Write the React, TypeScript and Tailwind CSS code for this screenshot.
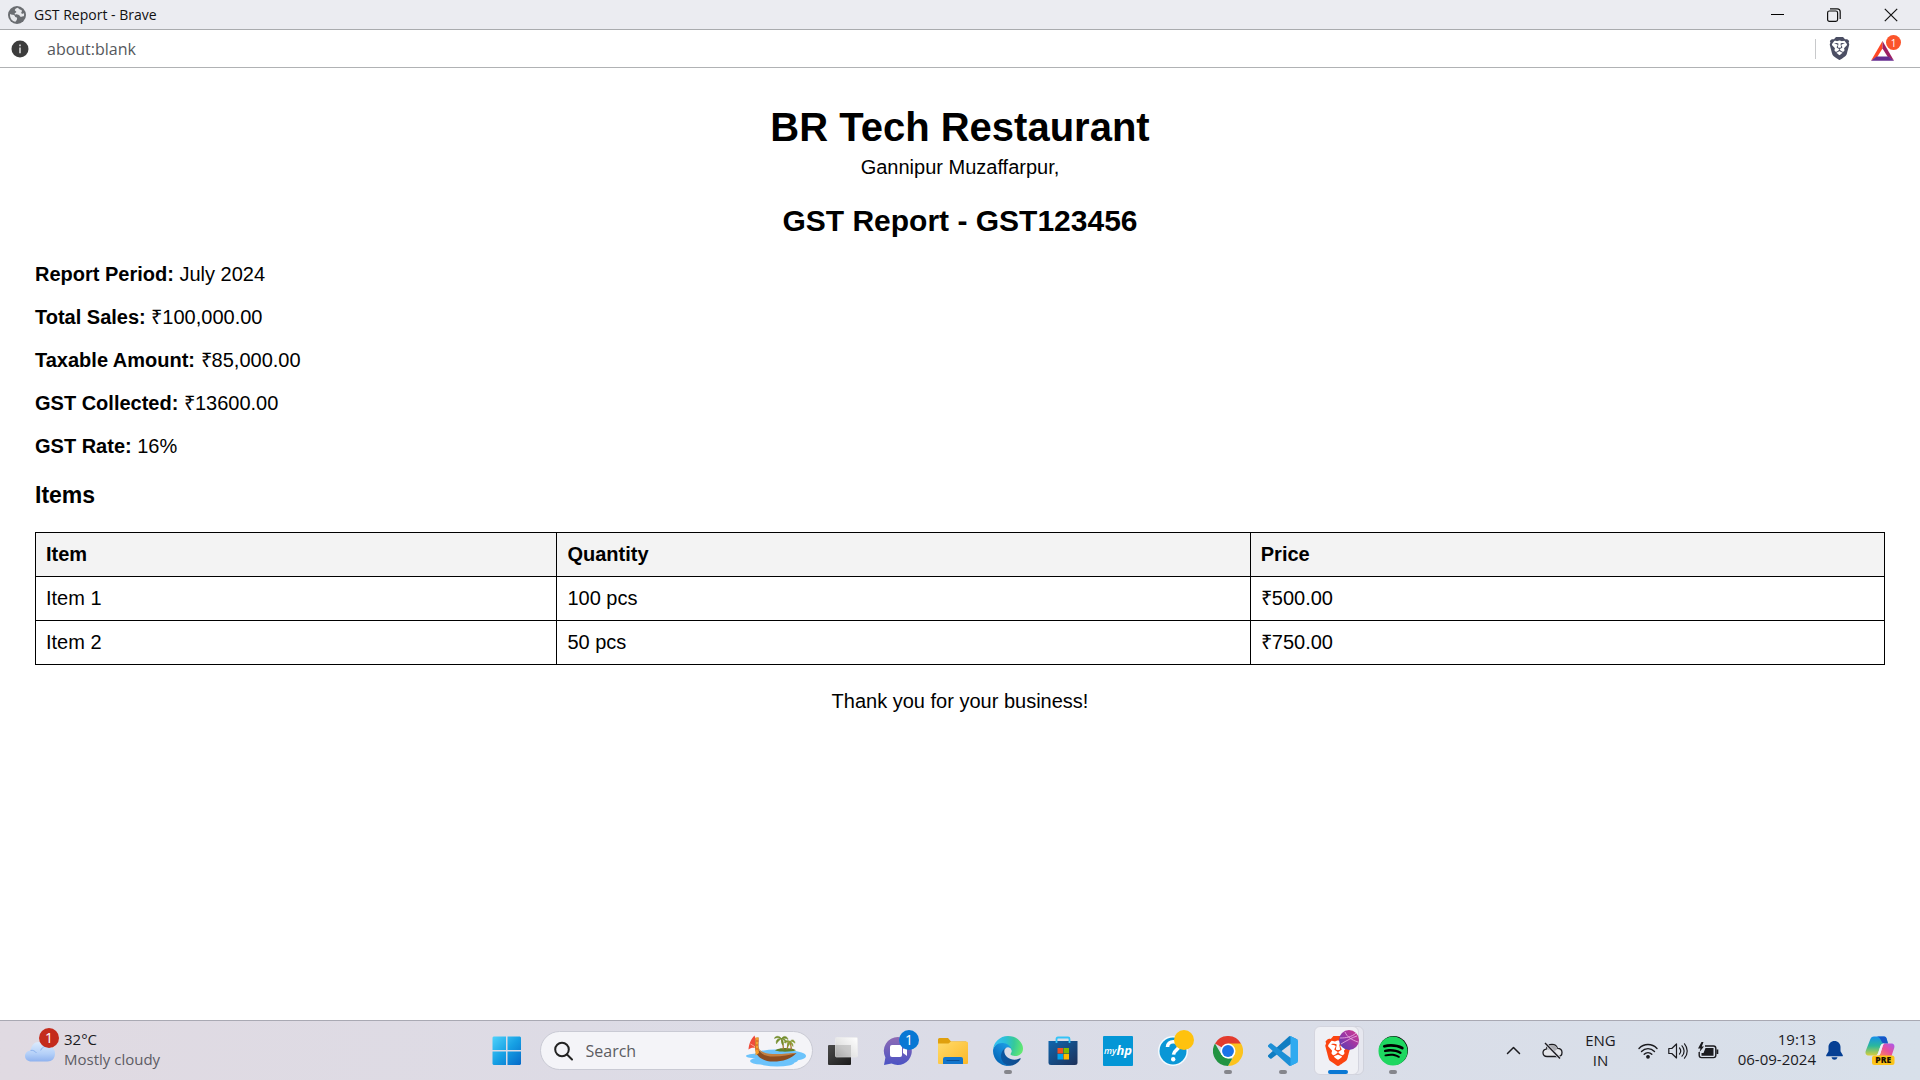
import React from "react";
import { SiBrave } from "react-icons/si";
import { FaSpotify } from "react-icons/fa";

const details = [
  { label: "Report Period:", value: "July 2024" },
  { label: "Total Sales:", value: "₹100,000.00" },
  { label: "Taxable Amount:", value: "₹85,000.00" },
  { label: "GST Collected:", value: "₹13600.00" },
  { label: "GST Rate:", value: "16%" },
];

const items = [
  { name: "Item 1", quantity: "100 pcs", price: "₹500.00" },
  { name: "Item 2", quantity: "50 pcs", price: "₹750.00" },
];

function GlobeIcon() {
  return (
    <svg width="18" height="18" viewBox="0 0 18 18" aria-hidden="true">
      <circle cx="9" cy="9" r="9" fill="#6a6d71" />
      <path d="M2 8c1.500.8 3 .6 4.200 1.200 1 .6.6 1.800 1.800 2.100 1.300.3 1.300 1.200.9 2.300-.3.900-.9 1.500-1.500 2.200C4.300 15.300 1.700 12.500 2 8z" fill="#e6e7ea" />
      <path d="M9.500 1.700c-1.600.6-2.600 1.300-2.700 2.400-.1 1 1.500.9 1.500 1.800 0 1-1.700.6-1.700 1.800 0 1.300 2.900.5 4.300 1.200 1.200.6 1 1.900 2.300 1.900 1.100 0 1.600-.7 2.700-.5.3-1.200.3-2.300 0-3.400-.9 1-2.100 1.200-2.600.4-.5-1 .9-1.500.6-2.600-.3-1.200-2-1-2.700-1.700-.4-.4-.7-.9-1.700-1.300z" fill="#e6e7ea" />
    </svg>
  );
}

function TitleBar() {
  return (
    <header className="flex h-[30px] items-center border-b border-[#a9abae] bg-[#ebecf1] pl-2">
      <GlobeIcon />
      <span className="ml-2 font-['Open_Sans',sans-serif] text-[14px] leading-5 text-[#111]">GST Report - Brave</span>
      <div className="ml-auto flex h-full">
        <button aria-label="Minimize" className="flex w-[56px] items-center justify-center">
          <svg width="14" height="14" viewBox="0 0 14 14"><path d="M0 6.500h13" stroke="#000" /></svg>
        </button>
        <button aria-label="Restore" className="flex w-[56px] items-center justify-center">
          <svg width="14" height="14" viewBox="0 0 14 14" fill="none" stroke="#111" strokeWidth="1.200">
            <rect x=".6" y="3" width="10" height="10.300" rx="1.800" />
            <path d="M3 .8h7.200c1.800 0 3 1.200 3 3V11" />
          </svg>
        </button>
        <button aria-label="Close" className="flex w-[58px] items-center justify-center">
          <svg width="14" height="14" viewBox="0 0 14 14"><path d="M.8.8l12.400 12.400M13.200.8L.8 13.200" stroke="#111" strokeWidth="1.200" /></svg>
        </button>
      </div>
    </header>
  );
}

function AddressBar() {
  return (
    <div className="flex h-[38px] items-center border-b border-[#b0b2b4] bg-white pl-[11px] pr-[19px]">
      <button aria-label="View site information">
        <svg className="block" width="18" height="18" viewBox="0 0 18 18">
          <circle cx="9" cy="9" r="8.500" fill="#3c3c3c" />
          <path d="M8.200 4.600h1.600v1.600H8.200zM8.200 7.600h1.600v5.600H8.200z" fill="#d8d8d8" />
        </svg>
      </button>
      <input
        aria-label="Address"
        readOnly
        value="about:blank"
        className="ml-[18px] min-w-0 flex-1 bg-transparent font-['Open_Sans',sans-serif] text-[16px] leading-6 text-[#55585c] outline-none"
      />
      <span className="mr-3 h-5 w-px bg-[#c8c9cb]" />
      <button aria-label="Brave Shields" className="mr-5">
        <SiBrave className="block size-[23px] text-[#4b4e63]" />
      </button>
      <button aria-label="Brave Rewards, 1 notification" className="relative pt-[5px] pr-[7px]">
        <svg className="block" width="23" height="20" viewBox="0 0 23 20">
          <path d="M11.500 0v7.500L6.500 15.500 0 19.700z" fill="#ff4724" />
          <path d="M11.500 0L23 19.700l-6.500-4.200-5-8z" fill="#9e1f63" />
          <path d="M0 19.700l5.500-4.200h12l5.500 4.200z" fill="#662d91" />
        </svg>
        <span className="absolute -top-px right-0 flex size-[15px] items-center justify-center rounded-full bg-[#fb542b] font-['Open_Sans',sans-serif] text-[10px] leading-none text-white">1</span>
      </button>
    </div>
  );
}

function Report() {
  return (
    <main className="flex-1 bg-white px-[35px] pt-9 font-['Liberation_Sans',Arial,sans-serif] text-[20px] leading-[23px] text-black">
      <div className="text-center">
        <h1 className="text-[40px] leading-[46px] font-bold">BR Tech Restaurant</h1>
        <p className="mt-[6px]">Gannipur Muzaffarpur,</p>
        <h2 className="mt-[25px] text-[30px] leading-[34px] font-bold">GST Report - GST123456</h2>
      </div>
      <div className="mt-[25px] flex flex-col gap-5">
        {details.map((d) => (
          <p key={d.label}>
            <strong className="font-bold">{d.label}</strong> {d.value}
          </p>
        ))}
      </div>
      <h3 className="mt-6 text-[23px] leading-[27px] font-bold">Items</h3>
      <table className="mt-[23px] w-full table-fixed border-collapse text-left">
        <colgroup>
          <col className="w-[28.2%]" />
          <col className="w-[37.5%]" />
          <col className="w-[34.3%]" />
        </colgroup>
        <thead className="bg-[#f3f3f3]">
          <tr>
            {["Item", "Quantity", "Price"].map((h) => (
              <th key={h} scope="col" className="border border-black px-[10px] py-[10px] font-bold">{h}</th>
            ))}
          </tr>
        </thead>
        <tbody>
          {items.map((i) => (
            <tr key={i.name}>
              <td className="border border-black px-[10px] py-[10px]">{i.name}</td>
              <td className="border border-black px-[10px] py-[10px]">{i.quantity}</td>
              <td className="border border-black px-[10px] py-[10px]">{i.price}</td>
            </tr>
          ))}
        </tbody>
      </table>
      <p className="mt-[25px] text-center">Thank you for your business!</p>
    </main>
  );
}

function CloudIcon() {
  return (
    <svg width="30" height="22" viewBox="0 0 30 22" aria-hidden="true">
      <defs>
        <linearGradient id="cloud" x1="0" y1="0" x2="0" y2="1">
          <stop offset="0" stopColor="#dcebfd" />
          <stop offset=".6" stopColor="#b4d0f8" />
          <stop offset="1" stopColor="#8fb2ef" />
        </linearGradient>
      </defs>
      <circle cx="24" cy="4" r="5" fill="#f4791f" />
      <path d="M6.500 21.500C2.500 21.500 0 19 0 16c0-3.200 2.500-5.300 5.500-5.600C6.300 5.500 9.500 2 13.500 2c3 0 5.500 1.600 6.800 4.300C26 4.500 30 8.500 30 13.500c0 5-3 8-7.500 8z" fill="url(#cloud)" />
      <path d="M5.500 10.400c2.500-.4 4.500.6 6 2.600M20.300 6.300c-2.300.6-3.800 2-4.600 4.200" fill="none" stroke="#7fa8ea" strokeWidth=".8" />
    </svg>
  );
}

function BoatIcon() {
  return (
    <svg width="62" height="32" viewBox="0 0 62 32" aria-hidden="true">
      <g fill="#6cc3fb">
        <ellipse cx="31" cy="19" rx="22" ry="4.500" />
        <ellipse cx="45" cy="21" rx="15" ry="5" />
        <ellipse cx="13" cy="21" rx="13" ry="2.500" />
        <ellipse cx="15" cy="26" rx="11" ry="3.500" />
        <ellipse cx="31" cy="28" rx="17" ry="3.500" />
        <ellipse cx="40" cy="25" rx="12" ry="4" />
      </g>
      <path d="M29 15.500c3-3 16-3.500 21-.3-5 1.800-15 2-21 .3z" fill="#617f25" />
      <path d="M37 14.500c1-3 0-6-1.500-10M45 14.500c1-3-1-5-1-8M41 14.500c.500-3 1.500-5 1-8" fill="none" stroke="#a87938" strokeWidth="1.300" />
      <path d="M35.500 3.800C33 0 29 1 28.500 3.500 31 2 33 3 35.500 3.800c-4-.8-6 1.500-5 5 1.500-2.500 3-4 5-5 0 2-.5 5 1.500 6.500.8-2 .3-5-1.500-6.500 2 .6 3.500 2 4.300 4.500 1-3-1-5-4.300-4.500C38 3 40 3 42 4.500 41.500 1 37 0 35.500 3.800z" fill="#708b28" stroke="#708b28" strokeWidth=".5" />
      <path d="M44 6.500c-2-2-5-1-6 1 2-.5 4-.5 6-1-2 .8-3 3-2.500 5.500C43 10.500 44 9 44 6.500c1 1.500 1.500 3.500 3 5 .5-2.500-1-4-3-5 2-.2 4 .4 5 1.800C49 5 46 3.500 44 6.500z" fill="#85992d" stroke="#85992d" strokeWidth=".5" />
      <path d="M8.500.5C4 5 3 10 2.500 14.500c2-1.500 4-2 6-1.500C10 9 10 4 8.500.5z" fill="#ef4a39" />
      <path d="M4.500 9l5 3" stroke="#ffa18b" />
      <path d="M9.500 3l3-.5v9c0 6 4 8.500 13 8.500 10 0 16-.8 25-2-5 6-14 8.500-23 8.500C15 26.500 9 20 9 12z" fill="#8d4d20" />
      <path d="M12.500 12c1 7 7 9.500 15 9.500 9 0 16-1.500 23-3.500-7-.2-14 1.500-24 1-8-.3-13-2.500-14-7z" fill="#c28143" />
      <path d="M9.500 2.500h3l-.500 8 1 7.500-3.500 2.500z" fill="#f7a02b" />
      <path d="M10 6h2.500M10 10h2M10 14h2" stroke="#d94f29" />
    </svg>
  );
}

function StartIcon() {
  return (
    <svg width="30" height="30" viewBox="0 0 30 30">
      <defs>
        <linearGradient id="win" x1="0" y1="0" x2="1" y2="1">
          <stop offset="0" stopColor="#4fd2fb" />
          <stop offset=".5" stopColor="#16a0e4" />
          <stop offset="1" stopColor="#0669c8" />
        </linearGradient>
      </defs>
      <path d="M1.500.5H14V14H.5V1.500zM15.500.5H28l1 1V14H15.500zM.5 15.500H14V29H1.500l-1-1zM15.500 15.500H29V28l-1 1H15.500z" fill="url(#win)" />
    </svg>
  );
}

function TaskViewIcon() {
  return (
    <svg width="30" height="30" viewBox="0 0 30 30">
      <defs>
        <linearGradient id="tvb" x1="0" y1="0" x2="1" y2="1"><stop offset="0" stopColor="#4a4a4a" /><stop offset="1" stopColor="#1b1b1b" /></linearGradient>
        <linearGradient id="tvf" x1="0" y1="1" x2="1" y2="0"><stop offset="0" stopColor="#b5b5b5" /><stop offset=".4" stopColor="#e4e4e4" /><stop offset="1" stopColor="#fff" /></linearGradient>
      </defs>
      <rect x="0" y="9" width="23" height="20" rx="1" fill="url(#tvb)" />
      <rect x="7.500" y="1.500" width="22" height="19.500" rx="1" fill="url(#tvf)" stroke="#ececec" strokeWidth=".6" />
      <path d="M8 9h15v12H8z" fill="#999" opacity=".4" />
    </svg>
  );
}

function ChatIcon() {
  return (
    <svg width="30" height="30" viewBox="0 0 30 30">
      <defs><linearGradient id="chat" x1="0" y1="0" x2="0" y2="1"><stop offset="0" stopColor="#8f6bb4" /><stop offset="1" stopColor="#4b53c4" /></linearGradient></defs>
      <path d="M15 1a14 14 0 1 1-6.500 26.500L1 29l1.400-7.500A14 14 0 0 1 15 1z" fill="url(#chat)" />
      <rect x="7" y="9" width="12" height="12" rx="2" fill="#fff" />
      <path d="M20 13l4-3v10l-4-3z" fill="#fff" />
    </svg>
  );
}

function FolderIcon() {
  return (
    <svg width="30" height="30" viewBox="0 0 30 30">
      <defs><linearGradient id="fold" x1="0" y1="0" x2="1" y2="1"><stop offset="0" stopColor="#ffdb6b" /><stop offset="1" stopColor="#fcb827" /></linearGradient></defs>
      <path d="M0 3.500Q0 2 1.500 2H10l3 3.500h15V10H0z" fill="#e0a00d" />
      <path d="M0 7.500h10.500l2.500-2h15.500Q30 5.500 30 7v20q0 1-1 1H1q-1 0-1-1z" fill="url(#fold)" />
      <path d="M5 28v-5q0-2 2-2h16q2 0 2 2v5z" fill="#1275cc" />
      <path d="M9 24.500h12" stroke="#084f96" strokeWidth="1.200" strokeLinecap="round" />
    </svg>
  );
}

function EdgeIcon() {
  return (
    <svg width="30" height="30" viewBox="4.600 5 256 256">
      <defs>
        <linearGradient id="e1" x1="63" y1="178" x2="241" y2="178" gradientUnits="userSpaceOnUse"><stop offset="0" stopColor="#0c59a4" /><stop offset="1" stopColor="#114a8b" /></linearGradient>
        <linearGradient id="e2" x1="157" y1="100" x2="46" y2="221" gradientUnits="userSpaceOnUse"><stop offset="0" stopColor="#1b9de2" /><stop offset=".5" stopColor="#1383d3" /><stop offset="1" stopColor="#0669b9" /></linearGradient>
        <radialGradient id="e3" cx="30" cy="55" r="240" gradientUnits="userSpaceOnUse"><stop offset="0" stopColor="#35c1f1" /><stop offset=".35" stopColor="#2bbfd8" /><stop offset=".65" stopColor="#36c99a" /><stop offset="1" stopColor="#66eb6e" /></radialGradient>
      </defs>
      <path fill="url(#e1)" d="M235.680 195.460a93.730 93.730 0 0 1-10.540 4.710 101.870 101.870 0 0 1-35.900 6.460c-47.320 0-88.540-32.550-88.540-74.320A31.480 31.480 0 0 1 117.130 105c-42.800 1.800-53.800 46.400-53.800 72.530 0 73.880 68.090 81.370 82.760 81.370 7.910 0 19.840-2.300 27-4.560l1.310-.44a128.340 128.340 0 0 0 66.600-52.800 4 4 0 0 0-5.320-5.640z" />
      <path fill="url(#e2)" d="M110.340 246.340A79.200 79.200 0 0 1 87.600 225a80.720 80.720 0 0 1 29.530-120c3.120-1.470 8.450-4.050 15.540-4a32.350 32.350 0 0 1 25.690 13 31.880 31.880 0 0 1 6.360 18.660c0-.21 24.460-79.600-80-79.600-43.900 0-80 41.660-80 78.210a130.150 130.150 0 0 0 12.110 56 128 128 0 0 0 156.380 67.110 75.550 75.550 0 0 1-62.780-8z" />
      <path fill="url(#e3)" d="M156.940 153.780c-.81 1.050-3.300 2.500-3.300 5.660 0 2.610 1.700 5.120 4.720 7.230 14.380 10 41.490 8.680 41.560 8.680a59.560 59.560 0 0 0 30.270-8.350 61.380 61.380 0 0 0 30.430-52.880c.26-22.410-8-37.310-11.340-43.910C228.090 28.760 182.350 5 132.610 5a128 128 0 0 0-128 126.200c.48-36.540 36.800-66.050 80-66.050 3.500 0 23.460.34 42 10.070 16.340 8.580 24.900 18.940 30.850 29.210 6.180 10.670 7.280 24.150 7.280 29.520s-2.740 13.330-7.800 19.830z" />
    </svg>
  );
}

function StoreIcon() {
  return (
    <svg width="30" height="30" viewBox="0 0 30 30">
      <defs><linearGradient id="store" x1="0" y1="0" x2="1" y2="1"><stop offset="0" stopColor="#0f66ae" /><stop offset="1" stopColor="#1d3059" /></linearGradient></defs>
      <path d="M.5 5h29v21.500q0 2.500-2.500 2.500H3q-2.500 0-2.500-2.500z" fill="url(#store)" />
      <path d="M8.500 7V3q0-1.500 1.500-1.500h10q1.500 0 1.500 1.500v4" fill="none" stroke="#34c3f7" strokeWidth="1.800" />
      <path d="M9.500 12H15v5.500H9.500z" fill="#f25022" /><path d="M15.500 12H21v5.500h-5.500z" fill="#7fba00" />
      <path d="M9.500 18H15v5.500H9.500z" fill="#00a4ef" /><path d="M15.500 18H21v5.500h-5.500z" fill="#ffb900" />
    </svg>
  );
}

function MyHpIcon() {
  return (
    <span className="flex size-[30px] items-center justify-center rounded-[1px] bg-[#0396d6] font-['Open_Sans',sans-serif] leading-none text-white italic">
      <span className="text-[9px] font-semibold">my</span>
      <span className="text-[13px] font-bold">hp</span>
    </span>
  );
}

function HelpIcon() {
  return (
    <svg width="30" height="30" viewBox="0 0 30 30">
      <circle cx="15" cy="15" r="15" fill="#f4fbff" />
      <circle cx="15" cy="15" r="13.500" fill="#0a97d6" />
      <path d="M9.500 11c0-3.500 2.600-5.300 5.700-5.300s5.500 1.800 5.500 4.700c0 3.800-4.900 3.800-5.200 8.200" fill="none" stroke="#fff" strokeWidth="3.600" />
      <circle cx="15.200" cy="23.300" r="2.200" fill="#fff" />
    </svg>
  );
}

function ChromeIcon() {
  return (
    <svg width="30" height="30" viewBox="0 0 48 48">
      <path d="M24 24L3.200 12A24 24 0 0 1 44.800 12z" fill="#e33b2e" />
      <path d="M24 12h20.800A24 24 0 0 1 24 48l10.400-18z" fill="#fcc31e" />
      <path d="M3.200 12l10.400 18L24 36h6.900L24 48A24 24 0 0 1 3.200 12z" fill="#229342" />
      <circle cx="24" cy="24" r="12" fill="#fff" />
      <circle cx="24" cy="24" r="9.500" fill="#1a73e8" />
    </svg>
  );
}

function VsCodeIcon() {
  return (
    <svg width="30" height="30" viewBox="0 0 100 100">
      <path fill="#0f7dc2" d="M96.460 10.800L75.860.9a6.230 6.230 0 0 0-7.100 1.200L1.300 63.600a4.170 4.170 0 0 0 0 6.160l5.510 5a4.170 4.170 0 0 0 5.320.24l81.230-61.600a4.130 4.130 0 0 1 6.640 3.300v-.24a6.250 6.250 0 0 0-3.540-5.660z" />
      <path fill="#1c8fd6" d="M96.460 89.200l-20.600 9.900a6.230 6.230 0 0 1-7.100-1.200L1.300 36.400a4.170 4.170 0 0 1 0-6.160l5.510-5a4.170 4.170 0 0 1 5.320-.24l81.230 61.600a4.130 4.130 0 0 0 6.640-3.300v.24a6.250 6.250 0 0 1-3.540 5.660z" />
      <path fill="#2faaf0" d="M75.860 99.100a6.230 6.230 0 0 1-7.100-1.200 3.660 3.660 0 0 0 6.250-2.600V4.700a3.660 3.660 0 0 0-6.250-2.600 6.230 6.230 0 0 1 7.100-1.200l20.600 9.900A6.250 6.250 0 0 1 100 16.400v67.200a6.250 6.250 0 0 1-3.540 5.600z" />
    </svg>
  );
}

function BraveIcon() {
  return (
    <span className="relative flex size-[30px] items-center justify-center">
      <svg className="absolute" width="22" height="26" viewBox="0 0 22 26"><path d="M5 2h12l4 5-2 13-8 5-8-5L1 7z" fill="#fff" /></svg>
      <SiBrave className="relative size-[30px] text-[#fb4410]" />
      <svg className="absolute -top-[6px] -right-[6px]" width="20" height="20" viewBox="0 0 20 20">
        <defs><linearGradient id="orb" x1="0" y1="1" x2="1" y2="0"><stop offset="0" stopColor="#4b3fb6" /><stop offset=".5" stopColor="#9b37a5" /><stop offset="1" stopColor="#d53a8d" /></linearGradient></defs>
        <circle cx="10" cy="10" r="10" fill="url(#orb)" />
        <path d="M1 8c6 0 12-1 16-5M2 14c5-3 12-7 16-8M6 2c2 5 7 8 13 10" fill="none" stroke="#e6a8df" strokeWidth=".9" />
      </svg>
    </span>
  );
}

function SpotifyIcon() {
  return (
    <span className="flex size-[29px] items-center justify-center rounded-full bg-black">
      <FaSpotify className="size-[30px] shrink-0 text-[#1ed760]" />
    </span>
  );
}

type TaskbarEntry = { name: string; icon: React.ReactNode; running?: boolean; active?: boolean; badge?: string; dot?: boolean };

const apps: TaskbarEntry[] = [
  { name: "Task view", icon: <TaskViewIcon /> },
  { name: "Chat", icon: <ChatIcon />, badge: "1" },
  { name: "File Explorer", icon: <FolderIcon /> },
  { name: "Microsoft Edge", icon: <EdgeIcon />, running: true },
  { name: "Microsoft Store", icon: <StoreIcon /> },
  { name: "myHP", icon: <MyHpIcon /> },
  { name: "Support Assistant", icon: <HelpIcon />, dot: true },
  { name: "Google Chrome", icon: <ChromeIcon />, running: true },
  { name: "Visual Studio Code", icon: <VsCodeIcon />, running: true },
  { name: "Brave", icon: <BraveIcon />, active: true },
  { name: "Spotify", icon: <SpotifyIcon />, running: true },
];

function TaskbarApp({ app }: { app: TaskbarEntry }) {
  return (
    <button aria-label={app.name} className="relative flex h-full w-[55px] items-center justify-center">
      {app.active && (
        <>
          <span className="absolute top-[5px] right-[2px] h-[49px] w-10 rounded-md border border-[#d0d2dc] bg-[#e6e7ef]" />
          <span className="absolute top-[5px] left-[3px] h-[49px] w-[45px] rounded-md border border-[#d4d5df] bg-[#eff0f5]" />
          <span className="absolute bottom-[6px] left-[17px] h-1 w-5 rounded-full bg-[#0a78d4]" />
        </>
      )}
      <span className="relative">
        {app.icon}
        {app.badge && (
          <span className="absolute -top-[6px] -right-[6px] flex size-5 items-center justify-center rounded-full bg-[#0878d4] font-['Open_Sans',sans-serif] text-[14px] leading-none text-white">{app.badge}</span>
        )}
        {app.dot && <span className="absolute -top-[6px] -right-[6px] size-5 rounded-full bg-[#ffc20e]" />}
      </span>
      {app.running && <span className="absolute bottom-[6px] h-1 w-2 rounded-full bg-[#85868c]" />}
    </button>
  );
}

function CopilotIcon() {
  return (
    <svg width="30" height="29" viewBox="0 0 30 29">
      <defs>
        <linearGradient id="cpl" x1="0" y1="0" x2="0" y2="1"><stop offset="0" stopColor="#1690ea" /><stop offset=".5" stopColor="#2bb89b" /><stop offset="1" stopColor="#d9cf3b" /></linearGradient>
        <linearGradient id="cpr" x1="1" y1="0" x2="0" y2="1"><stop offset="0" stopColor="#a85bf0" /><stop offset=".5" stopColor="#e84f9b" /><stop offset="1" stopColor="#ff8a54" /></linearGradient>
      </defs>
      <path d="M9 .5h10c2 0 2.500 1.500 3 3.500l1 3.500h-4c-2 0-3 1-3.600 3l-2 6c-.6 2-1.600 3-3.600 3H4C1 19.500 0 17.500.7 15L5 4C5.800 1.500 7 .5 9 .5z" fill="url(#cpl)" />
      <path d="M12 .5h7c2 0 2.500 1.500 3 3.500l1 3.500h-5c-2-2-2-6-6-7z" fill="#1756c7" />
      <path d="M20 7.500h6c3 0 4 2 3.200 4.500L26.500 20H13c1.500-.5 2-1.500 2.500-3l2.200-7c.4-1.500 1-2.500 2.300-2.500z" fill="url(#cpr)" />
      <path d="M19.500 7.500c-2 0-3.500.5-4.300 3l-2 6c-.4 1.500-1.200 2.500-2.500 3h3c1.200-.5 1.600-1.500 2-3l2-6.500c.4-1.500 1-2.500 2.300-2.500z" fill="#f1edf6" />
      <rect x="7" y="19.500" width="22.500" height="9.500" rx="2.500" fill="#fcc419" />
      <text x="18.200" y="27.300" textAnchor="middle" fontFamily="Open Sans, sans-serif" fontWeight="800" fontSize="8.500" fill="#1b1200">PRE</text>
    </svg>
  );
}

function SystemTray() {
  return (
    <div className="flex h-full flex-1 items-center justify-end text-[#1b1b1f]">
      <button aria-label="Show hidden icons" className="mr-[21px]">
        <svg className="block" width="15" height="9" viewBox="0 0 15 9"><path d="M1.500 7.500l6-6 6 6" fill="none" stroke="currentColor" strokeWidth="1.500" strokeLinecap="round" strokeLinejoin="round" /></svg>
      </button>
      <button aria-label="OneDrive" className="mr-[22px]">
        <svg className="block" width="21" height="18" viewBox="0 0 21 18">
          <path d="M5 14.500C2.500 14.500 1 13 1 10.800c0-2 1.300-3.400 3.300-3.700C5 4.300 7.300 2.500 10 2.500c2.800 0 4.700 1.500 5.500 3.900 2.700.1 4.500 1.800 4.500 4.100s-1.800 4-4.200 4z" fill="#e5e6ea" stroke="currentColor" strokeWidth="1.300" />
          <path d="M4.500 7.500c3-.5 5 1 7 2.500l4-3c-.5-2.500-2.700-4-5.500-4S5 4.500 4.500 7.500z" fill="#a9aab0" />
          <path d="M3 1l15 15.500" stroke="#dcdde7" strokeWidth="2.800" /><path d="M3 1l15 15.500" stroke="currentColor" strokeWidth="1.400" />
        </svg>
      </button>
      <button className="mr-[22px] pb-[2px] text-center text-[15px] leading-5">
        ENG<br />IN
      </button>
      <button aria-label="Network, volume and battery" className="mr-[19px] flex items-center gap-[10px]">
        <svg width="20" height="16" viewBox="0 0 20 16" fill="none" stroke="currentColor" strokeWidth="1.400" strokeLinecap="round">
          <path d="M1 5.500c5-5.300 13-5.300 18 0M3.500 8.500c3.700-3.900 9.300-3.900 13 0M6.200 11.300c2.200-2.300 5.400-2.300 7.600 0" /><circle cx="10" cy="13.800" r="1.200" fill="currentColor" />
        </svg>
        <svg width="20" height="18" viewBox="0 0 20 18" fill="none" stroke="currentColor" strokeWidth="1.200" strokeLinecap="round" strokeLinejoin="round">
          <path d="M.8 6.500h3L8.500 2v14l-4.700-4.500h-3zM11.500 6c1.500 1.800 1.500 4.200 0 6M14 3.800c2.800 3 2.800 7.400 0 10.400M16.500 1.800c3.600 4.200 3.600 10.200 0 14.400" />
        </svg>
        <svg width="21" height="18" viewBox="0 0 21 18">
          <path d="M7 4h8.500q2.300 0 2.300 2.300v7q0 2.300-2.300 2.300h-12q-2.300 0-2.300-2.300V10" fill="none" stroke="currentColor" strokeWidth="1.400" />
          <path d="M7.500 6h8v7.700H3.500V11h2zM18.500 7.500h1.800v4.500h-1.800z" fill="currentColor" />
          <path d="M3.500 0L0 6.500h2.500L1.500 10 6 4.500H3.800L5.500 0z" fill="currentColor" />
        </svg>
      </button>
      <button className="mr-[10px] pb-[4px] text-right text-[15px] leading-5">
        19:13<br />06-09-2024
      </button>
      <button aria-label="Notifications" className="mr-[22px]">
        <svg className="block" width="17" height="19" viewBox="0 0 17 19" fill="#053f94">
          <path d="M8.500 0C5 0 2.500 2.700 2.500 6v4.300L.3 14q-.6 1.300.7 1.300h15q1.300 0 .7-1.300l-2.200-3.700V6c0-3.300-2.500-6-6-6zM5.500 16.300h6c-.5 1.700-1.600 2.500-3 2.500s-2.500-.8-3-2.500z" />
        </svg>
      </button>
      <button aria-label="Copilot preview" className="mr-[25px]"><CopilotIcon /></button>
    </div>
  );
}

function Taskbar() {
  return (
    <footer className="flex h-[60px] border-t border-[#a9a9b3] bg-linear-to-r from-[#e0dae2] via-[#dbdce7] to-[#d8e0ea] font-['Open_Sans',sans-serif]">
      <div className="flex flex-1">
        <button className="relative ml-[25px] flex h-full items-center text-left">
          <CloudIcon />
          <span className="absolute top-[7px] left-[14px] flex size-5 items-center justify-center rounded-full bg-[#c42b1c] text-[14px] leading-none text-white">1</span>
          <span className="ml-[9px] pb-[3px] text-[15px] leading-5 text-[#5d5c64]">
            <span className="block text-[#1b1b1f]">32°C</span>
            Mostly cloudy
          </span>
        </button>
      </div>
      <div className="flex items-center pr-5">
        <button aria-label="Start" className="flex h-full w-[55px] items-center justify-center"><StartIcon /></button>
        <label className="mr-[3px] ml-[5px] flex h-[39px] w-[273px] items-center rounded-full border border-[#c9cad4] bg-[#f4f4f8] pr-1 pl-[13px]">
          <svg width="19" height="20" viewBox="0 0 19 20" fill="none" stroke="#222" strokeWidth="2" strokeLinecap="round"><circle cx="8" cy="8.500" r="6.800" /><path d="M13 13.500l5 5" /></svg>
          <input aria-label="Search" placeholder="Search" className="ml-[13px] w-0 min-w-0 flex-1 bg-transparent text-[16px] leading-6 outline-none placeholder:text-[#5c5c62]" />
          <BoatIcon />
        </label>
        {apps.map((app) => (
          <TaskbarApp key={app.name} app={app} />
        ))}
      </div>
      <SystemTray />
    </footer>
  );
}

export default function App() {
  return (
    <div className="flex min-h-screen flex-col bg-white">
      <TitleBar />
      <AddressBar />
      <Report />
      <Taskbar />
    </div>
  );
}
